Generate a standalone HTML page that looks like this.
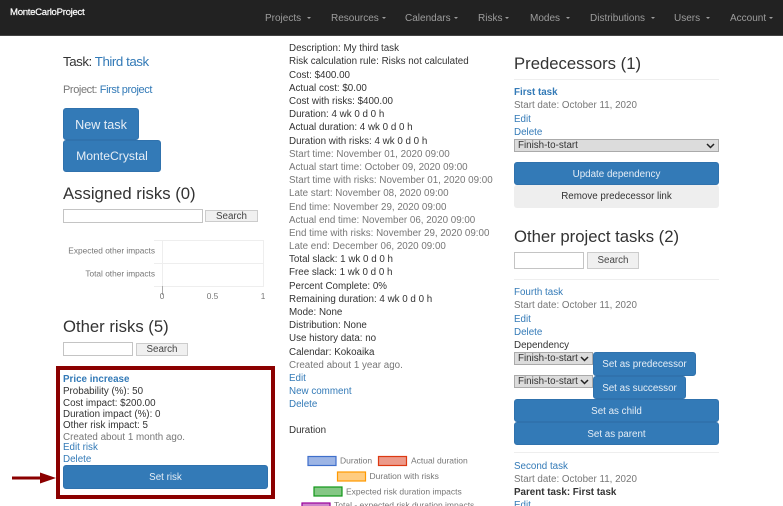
<!DOCTYPE html>
<html><head><meta charset="utf-8"><style>
html,body{margin:0;padding:0;width:783px;height:506px;overflow:hidden;background:#fff;font-family:"Liberation Sans",sans-serif;color:#333}
#w{position:relative;width:783px;height:506px;overflow:hidden;filter:blur(.3px)}
.t{position:absolute;white-space:nowrap;font-size:9.8px;line-height:15px}
.a{color:#337ab7}.g{color:#777}.b{font-weight:bold}
.n{position:absolute;top:12px;font-size:10px;line-height:13px;color:#9d9d9d;white-space:nowrap}
.n i{display:inline-block;width:0;height:0;border-left:2.5px solid transparent;border-right:2.5px solid transparent;border-top:2.5px solid #9d9d9d;vertical-align:middle;margin-left:3px}
.h{position:absolute;white-space:nowrap;color:#333;font-size:16.7px;line-height:20px}
.btn{position:absolute;background:#337ab7;border:1px solid #3072ad;border-radius:3px;color:#e6eef6;text-align:center;box-sizing:border-box;font-size:9.8px;white-space:nowrap}
.s{position:absolute;box-sizing:border-box;background:#f0f0f0;border:1px solid #ccc;color:#444;font-size:9.8px;text-align:center;line-height:11px;white-space:nowrap}
.i{position:absolute;box-sizing:border-box;background:#fff;border:1px solid #c4c4c4}
.sel{position:absolute;box-sizing:border-box;background:#dcdcdc;border:1px solid #aaa;font-size:9.8px;line-height:11px;color:#333;padding-left:3px;white-space:nowrap}
.sel svg{position:absolute;right:3px;top:3px}
.hr{position:absolute;height:1px;background:#eee}
</style></head><body><div id="w">
<div style="position:absolute;left:0;top:0;width:783px;height:35px;background:#222;border-bottom:1px solid #444"></div>
<div class="t b" style="left:10px;top:5px;color:#fff;font-size:9.6px;font-weight:normal;letter-spacing:-.3px;-webkit-text-stroke:.2px #fff">MonteCarloProject</div>
<div class="n" style="left:265px">Projects <i></i></div>
<div class="n" style="left:331px">Resources<i></i></div>
<div class="n" style="left:405px">Calendars<i></i></div>
<div class="n" style="left:478px">Risks<i></i></div>
<div class="n" style="left:530px">Modes <i></i></div>
<div class="n" style="left:590px">Distributions <i></i></div>
<div class="n" style="left:674px">Users <i></i></div>
<div class="n" style="left:730px">Account<i></i></div>

<div class="t" style="left:63px;top:53px;font-size:13.3px;line-height:17px;letter-spacing:-.45px">Task: <span class="a">Third task</span></div>
<div class="t" style="left:63px;top:83px;font-size:11px;letter-spacing:-.4px;color:#777">Project: <span class="a">First project</span></div>
<div class="btn" style="left:63px;top:108px;width:76px;height:32px;line-height:32px;font-size:12.6px">New task</div>
<div class="btn" style="left:63px;top:140px;width:98px;height:32px;line-height:31px;font-size:12.2px">MonteCrystal</div>
<div class="h" style="left:63px;top:184px">Assigned risks (0)</div>
<div class="i" style="left:63px;top:209px;width:140px;height:14px"></div>
<div class="s" style="left:205px;top:210px;width:53px;height:12px">Search</div>

<svg style="position:absolute;left:60px;top:235px" width="215" height="75">
<g stroke="#eee"><line x1="94" y1="5.500" x2="204" y2="5.500"/><line x1="94" y1="28.500" x2="204" y2="28.500"/><line x1="94" y1="51.500" x2="204" y2="51.500"/><line x1="102.500" y1="5" x2="102.500" y2="52"/><line x1="203.500" y1="5" x2="203.500" y2="52"/></g>
<line x1="102.500" y1="51" x2="102.500" y2="60" stroke="#aaa"/>
<g font-family="Liberation Sans" font-size="8.300" fill="#777"><text x="95" y="18.500" text-anchor="end">Expected other impacts</text><text x="95" y="41.500" text-anchor="end">Total other impacts</text>
<text x="102" y="64" text-anchor="middle">0</text><text x="152.500" y="64" text-anchor="middle">0.5</text><text x="203" y="64" text-anchor="middle">1</text></g></svg>

<div class="h" style="left:63px;top:317px">Other risks (5)</div>
<div class="i" style="left:63px;top:342px;width:70px;height:14px"></div>
<div class="s" style="left:136px;top:343px;width:52px;height:13px">Search</div>

<div style="position:absolute;left:56px;top:366px;width:219px;height:133px;box-sizing:border-box;border:4px solid #8b0000"></div>
<div class="t a b" style="left:63px;top:372px">Price increase</div>
<div class="t" style="left:63px;top:384px">Probability (%): 50</div>
<div class="t" style="left:63px;top:396px">Cost impact: $200.00</div>
<div class="t" style="left:63px;top:407px">Duration impact (%): 0</div>
<div class="t" style="left:63px;top:418px">Other risk impact: 5</div>
<div class="t g" style="left:63px;top:430px">Created about 1 month ago.</div>
<div class="t a" style="left:63px;top:440px">Edit risk</div>
<div class="t a" style="left:63px;top:452px">Delete</div>
<div class="btn" style="left:63px;top:465px;width:205px;height:24px;line-height:23px">Set risk</div>
<svg style="position:absolute;left:10px;top:470px" width="50" height="16"><path d="M2 8H42" stroke="#8b0000" stroke-width="3"/><path d="M30 2.500L46 8L30 13.500Z" fill="#8b0000"/></svg>

<div class="t" style="left:289px;top:41px">Description: My third task</div>
<div class="t" style="left:289px;top:54px">Risk calculation rule: Risks not calculated</div>
<div class="t" style="left:289px;top:67.500px">Cost: $400.00</div>
<div class="t" style="left:289px;top:80.500px">Actual cost: $0.00</div>
<div class="t" style="left:289px;top:94px">Cost with risks: $400.00</div>
<div class="t" style="left:289px;top:107px">Duration: 4 wk 0 d 0 h</div>
<div class="t" style="left:289px;top:120px">Actual duration: 4 wk 0 d 0 h</div>
<div class="t" style="left:289px;top:133.500px">Duration with risks: 4 wk 0 d 0 h</div>
<div class="t g" style="left:289px;top:146.500px">Start time: November 01, 2020 09:00</div>
<div class="t g" style="left:289px;top:160px">Actual start time: October 09, 2020 09:00</div>
<div class="t g" style="left:289px;top:173px">Start time with risks: November 01, 2020 09:00</div>
<div class="t g" style="left:289px;top:186px">Late start: November 08, 2020 09:00</div>
<div class="t g" style="left:289px;top:199.500px">End time: November 29, 2020 09:00</div>
<div class="t g" style="left:289px;top:212.500px">Actual end time: November 06, 2020 09:00</div>
<div class="t g" style="left:289px;top:225.500px">End time with risks: November 29, 2020 09:00</div>
<div class="t g" style="left:289px;top:239px">Late end: December 06, 2020 09:00</div>
<div class="t" style="left:289px;top:252px">Total slack: 1 wk 0 d 0 h</div>
<div class="t" style="left:289px;top:265px">Free slack: 1 wk 0 d 0 h</div>
<div class="t" style="left:289px;top:278.500px">Percent Complete: 0%</div>
<div class="t" style="left:289px;top:291.500px">Remaining duration: 4 wk 0 d 0 h</div>
<div class="t" style="left:289px;top:305px">Mode: None</div>
<div class="t" style="left:289px;top:318px">Distribution: None</div>
<div class="t" style="left:289px;top:331px">Use history data: no</div>
<div class="t" style="left:289px;top:344.500px">Calendar: Kokoaika</div>
<div class="t g" style="left:289px;top:357.500px">Created about 1 year ago.</div>
<div class="t a" style="left:289px;top:370.500px">Edit</div>
<div class="t a" style="left:289px;top:384px">New comment</div>
<div class="t a" style="left:289px;top:397px">Delete</div>
<div class="t" style="left:289px;top:423px">Duration</div>

<svg style="position:absolute;left:295px;top:450px" width="200" height="56">
<g stroke-width="1.200"><rect x="13" y="6.500" width="28" height="9" fill="#9db5e5" stroke="#3f6fcb"/><rect x="83.500" y="6.500" width="28" height="9" fill="#ec9a8a" stroke="#dc3912"/><rect x="42.500" y="22" width="28" height="9" fill="#ffcc80" stroke="#ff9900"/><rect x="19" y="37" width="28" height="9" fill="#85c785" stroke="#109618"/><rect x="7" y="53" width="28" height="9" fill="#cc85cc" stroke="#990099"/></g>
<g font-family="Liberation Sans" font-size="8.500" fill="#777"><text x="45" y="13.500">Duration</text><text x="116" y="13.500">Actual duration</text><text x="74.500" y="29">Duration with risks</text><text x="51" y="44.500">Expected risk duration impacts</text><text x="39" y="58">Total - expected risk duration impacts</text></g></svg>

<div class="h" style="left:514px;top:54px">Predecessors (1)</div>
<div class="hr" style="left:514px;top:79px;width:205px"></div>
<div class="t a b" style="left:514px;top:85px">First task</div>
<div class="t g" style="left:514px;top:98px">Start date: October 11, 2020</div>
<div class="t a" style="left:514px;top:111.500px">Edit</div>
<div class="t a" style="left:514px;top:124.500px">Delete</div>
<div class="sel" style="left:514px;top:139px;width:205px;height:13px">Finish-to-start<svg width="9" height="6"><path d="M1 1L4.500 4.500L8 1" fill="none" stroke="#222" stroke-width="1.500"/></svg></div>
<div class="btn" style="left:514px;top:162px;width:205px;height:23px;line-height:23px">Update dependency</div>
<div class="t" style="left:514px;top:185px;width:205px;height:23px;line-height:23px;background:#eee;text-align:center;border-radius:3px">Remove predecessor link</div>
<div class="h" style="left:514px;top:227px">Other project tasks (2)</div>
<div class="i" style="left:514px;top:252px;width:70px;height:17px"></div>
<div class="s" style="left:587px;top:252px;width:52px;height:17px;line-height:15px">Search</div>
<div class="hr" style="left:514px;top:279px;width:205px"></div>
<div class="t a" style="left:514px;top:285px">Fourth task</div>
<div class="t g" style="left:514px;top:298px">Start date: October 11, 2020</div>
<div class="t a" style="left:514px;top:311.500px">Edit</div>
<div class="t a" style="left:514px;top:324.500px">Delete</div>
<div class="t" style="left:514px;top:338px">Dependency</div>
<div class="sel" style="left:514px;top:352px;width:79px;height:13px">Finish-to-start<svg width="9" height="6"><path d="M1 1L4.500 4.500L8 1" fill="none" stroke="#222" stroke-width="1.500"/></svg></div>
<div class="btn" style="left:593px;top:352px;width:103px;height:24px;line-height:24px">Set as predecessor</div>
<div class="sel" style="left:514px;top:375px;width:79px;height:13px">Finish-to-start<svg width="9" height="6"><path d="M1 1L4.500 4.500L8 1" fill="none" stroke="#222" stroke-width="1.500"/></svg></div>
<div class="btn" style="left:593px;top:376px;width:93px;height:23px;line-height:23px">Set as successor</div>
<div class="btn" style="left:514px;top:399px;width:205px;height:23px;line-height:23px">Set as child</div>
<div class="btn" style="left:514px;top:422px;width:205px;height:23px;line-height:23px">Set as parent</div>
<div class="hr" style="left:514px;top:452px;width:205px"></div>
<div class="t a" style="left:514px;top:459px">Second task</div>
<div class="t g" style="left:514px;top:472px">Start date: October 11, 2020</div>
<div class="t b" style="left:514px;top:485px">Parent task: First task</div>
<div class="t a" style="left:514px;top:498px">Edit</div>
</div></body></html>
